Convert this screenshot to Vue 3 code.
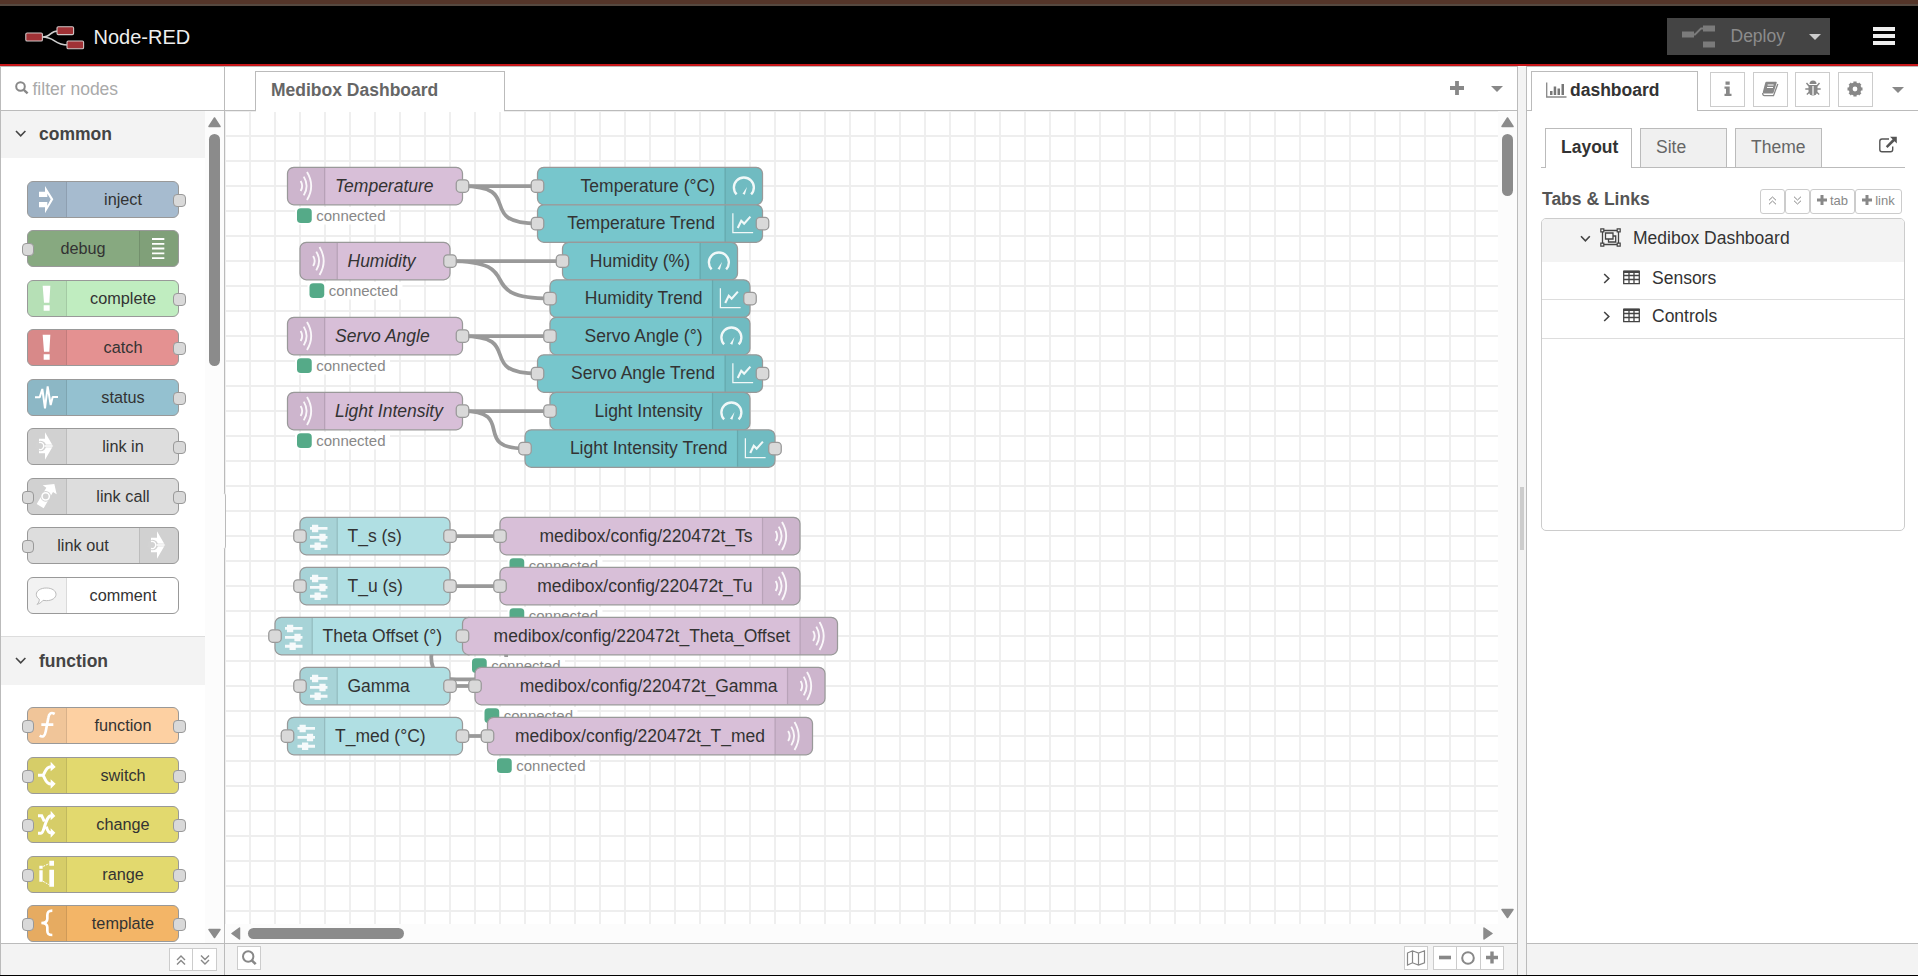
<script setup>
const common = [
  { label: 'inject', color: '#a6bbcf', icon: 'inject', out: true },
  { label: 'debug', color: '#87a980', icon: 'debug', right: true, in: true },
  { label: 'complete', color: '#c0edc0', icon: 'alert', out: true },
  { label: 'catch', color: '#e49191', icon: 'alert', out: true },
  { label: 'status', color: '#94c1d0', icon: 'status', out: true },
  { label: 'link in', color: '#dddddd', icon: 'link', out: true },
  { label: 'link call', color: '#dddddd', icon: 'call', in: true, out: true },
  { label: 'link out', color: '#dddddd', icon: 'link', right: true, in: true },
  { label: 'comment', color: '#ffffff', icon: 'comment' }
]
const functions = [
  { label: 'function', color: '#fdd0a2', icon: 'function', in: true, out: true },
  { label: 'switch', color: '#e2d96e', icon: 'switch', in: true, out: true },
  { label: 'change', color: '#e2d96e', icon: 'change', in: true, out: true },
  { label: 'range', color: '#e2d96e', icon: 'range', in: true, out: true },
  { label: 'template', color: '#f3b567', icon: 'template', in: true, out: true }
]
const categories = [
  { name: 'common', nodes: common },
  { name: 'function', nodes: functions }
]

const PINK = '#d8bfd8'
const TEAL = '#77c6cc'
const AQUA = '#b0dfe3'
const mqttIn = (label, x, y, w) => ({ label, x, y, w, color: PINK, icon: 'mqtt', italic: true, out: true, status: true })
const gauge = (label, x, y, w) => ({ label, x, y, w, color: TEAL, icon: 'gauge', right: true, in: true })
const chart = (label, x, y, w) => ({ label, x, y, w, color: TEAL, icon: 'chart', right: true, in: true, out: true })
const slider = (label, x, y, w) => ({ label, x, y, w, color: AQUA, icon: 'slider', in: true, out: true })
const mqttOut = (label, x, y, w) => ({ label, x, y, w, color: PINK, icon: 'mqtt', right: true, in: true, status: true })

const nodes = [
  mqttIn('Temperature', 50, 60, 140),
  mqttIn('Humidity', 60, 120, 120),
  mqttIn('Servo Angle', 50, 180, 140),
  mqttIn('Light Intensity', 50, 240, 140),
  gauge('Temperature (°C)', 250, 60, 180),
  chart('Temperature Trend', 250, 90, 180),
  gauge('Humidity (%)', 270, 120, 140),
  chart('Humidity Trend', 260, 150, 160),
  gauge('Servo Angle (°)', 260, 180, 160),
  chart('Servo Angle Trend', 250, 210, 180),
  gauge('Light Intensity', 260, 240, 160),
  chart('Light Intensity Trend', 240, 270, 200),
  slider('T_s (s)', 60, 340, 120),
  slider('T_u (s)', 60, 380, 120),
  slider('Theta Offset (°)', 40, 420, 160),
  slider('Gamma', 60, 460, 120),
  slider('T_med (°C)', 50, 500, 140),
  mqttOut('medibox/config/220472t_Ts', 220, 340, 240),
  mqttOut('medibox/config/220472t_Tu', 220, 380, 240),
  mqttOut('medibox/config/220472t_Theta_Offset', 190, 420, 300),
  mqttOut('medibox/config/220472t_Gamma', 200, 460, 280),
  mqttOut('medibox/config/220472t_T_med', 210, 500, 260)
]

function wire(x1, y1, x2, y2) {
  const delta = Math.hypot(x2 - x1, y2 - y1)
  const c = delta < 100 ? 0.75 * delta : 75
  return `M${x1} ${y1} C${x1 + c} ${y1} ${x2 - c} ${y2} ${x2} ${y2}`
}
const wires = [
  wire(190, 60, 250, 60), wire(190, 60, 250, 90),
  wire(180, 120, 270, 120), wire(180, 120, 260, 150),
  wire(190, 180, 260, 180), wire(190, 180, 250, 210),
  wire(190, 240, 260, 240), wire(190, 240, 240, 270),
  wire(180, 340, 220, 340), wire(180, 380, 220, 380),
  wire(180, 460, 200, 460), wire(190, 500, 210, 500),
  'M200 420 C218 420 225 425 225 437 C225 450 215 454.7 198 454.7 L185 454.7 C173 454.7 165 450 165 437 C165 425 172 420 190 420'
]
</script>

<template>
  <div class="app">
    <div class="strip"></div>
    <header class="header">
      <svg class="logo" width="60" height="24" viewBox="0 0 60 24">
        <path d="M17 11 C27 11 24 5 33 5 M17 11 C31 11 28 19 43 19" fill="none" stroke="#d0d0d0" stroke-width="1.5" />
        <g fill="#a03236" stroke="#d0c6c6" stroke-width="1.1">
          <rect x="0.8" y="7" width="16.6" height="8" rx="1.3" />
          <rect x="32" y="0.8" width="16.6" height="7.8" rx="1.3" />
          <rect x="42" y="15" width="16.6" height="7.8" rx="1.3" />
        </g>
      </svg>
      <span class="brand">Node-RED</span>
      <div class="deploy">
        <svg width="34" height="24" viewBox="0 0 34 24">
          <path d="M11 9.5 H13 L19 3.5 H22" fill="none" stroke="#7b7b7b" stroke-width="1.8" />
          <path d="M0 6.5 h12 v6 h-12z M21 0.5 h12 v6 h-12z M21 16.5 h12 v6 h-12z" fill="#7b7b7b" />
        </svg>
        <span>Deploy</span>
        <i class="caret light"></i>
      </div>
      <div class="burger"><i></i><i></i><i></i></div>
    </header>

    <main class="main">
      <section class="palette">
        <div class="search">
          <svg width="14" height="14" viewBox="0 0 14 14"><circle cx="5.5" cy="5.5" r="4.3" fill="none" stroke="#888" stroke-width="2" /><path d="M8.8 8.8 L12.6 12.4" stroke="#888" stroke-width="2.4" /></svg>
          <span>filter nodes</span>
        </div>
        <div class="palette-body">
          <div class="categories">
            <div v-for="cat in categories" :key="cat.name" class="category">
              <div class="cat-head">
                <svg width="12" height="8" viewBox="0 0 12 8"><path d="M1 1 L5.7 5.8 L10.4 1" fill="none" stroke="#444" stroke-width="1.6" /></svg>
                <span>{{ cat.name }}</span>
              </div>
              <div class="cat-nodes">
                <div v-for="n in cat.nodes" :key="n.label" class="pnode" :class="{ flip: n.right }" :style="{ background: n.color }">
                  <div class="picon">
                    <svg width="38" height="35" viewBox="3 3 114 105">
                      <path v-if="n.icon === 'inject'" fill="#fff" fill-rule="evenodd" d="M36 32 H54 V15 L79 55 L54 97 V79 H36Z M36 48 H61 V38 L71 55 L61 74 V63 H36Z" />
                      <path v-else-if="n.icon === 'debug'" stroke="#fff" stroke-width="5.500" d="M39 27 H76 M39 41.500 H76 M39 55.500 H76 M39 70 H76 M39 84.500 H76" />
                      <path v-else-if="n.icon === 'alert'" fill="#fff" d="M47 17 H70 L67 68 H51Z M50 76 H68 V92 H50Z" />
                      <path v-else-if="n.icon === 'status'" fill="none" stroke="#fff" stroke-width="6" stroke-linejoin="bevel" d="M24 55 H38 L46 30 L54 88 L62 22 L71 78 L77 54 H93" />
                      <g v-else-if="n.icon === 'link'">
                        <path fill="#fff" d="M36 32 H54 V13 L78 54 L54 95 V76 H36Z" />
                        <circle cx="41" cy="54" r="16" fill="#d2d2d2" />
                        <path d="M50 54 H80" stroke="#d2d2d2" stroke-width="8" />
                        <path d="M36 43.5 A11 11 0 1 1 36 64.500 M53 54 H77" fill="none" stroke="#fff" stroke-width="4" />
                      </g>
                      <g v-else-if="n.icon === 'call'">
                        <path fill="#fff" d="M29 78 L58 29 L47 22 L82 18 L89 49 L78 42 L50 91Z" />
                        <circle cx="56" cy="55" r="16" fill="#d2d2d2" />
                        <circle cx="56" cy="55" r="11" fill="none" stroke="#fff" stroke-width="4.500" />
                      </g>
                      <path v-else-if="n.icon === 'comment'" fill="#fff" stroke="#bbb" stroke-width="3" d="M58 33 C75 33 87 41 87 52 C87 63 75 71 58 71 L48 70 C43 77 36 80 30 82 C35 78 37 73 37 67 C31 63 28 58 28 52 C28 41 41 33 58 33Z" />
                      <path v-else-if="n.icon === 'function'" fill="none" stroke="#fff" stroke-width="8" d="M83 21 C73 15 66 18 64 32 L56 74 C54 87 47 92 38 86 M43 53 H79" />
                      <g v-else-if="n.icon === 'switch'" fill="none" stroke="#fff" stroke-width="9">
                        <path d="M33 55 H50 M48 55 C56 44 56 29 72 29 M48 55 C56 66 56 81 72 81" />
                        <path d="M71 14 L86 30 L71 43Z M71 67 L86 80 L71 95Z" fill="#fff" stroke="none" />
                      </g>
                      <g v-else-if="n.icon === 'change'" fill="none" stroke="#fff" stroke-width="9">
                        <path d="M33 29 H44 L52 46 M33 82 H42 C53 82 54 29 73 29 M58 62 C61 74 65 81 73 81" />
                        <path d="M71 14 L85 30 L71 43Z M71 67 L85 80 L71 95Z" fill="#fff" stroke="none" />
                      </g>
                      <g v-else-if="n.icon === 'range'" fill="#fff">
                        <path d="M37 29 H47 V38 H37Z M37 43 H47 V77 H37Z M67 14 H81 V29 H67Z M67 41 H81 V92 H67Z" />
                        <path d="M49 31 L66 23 M48 76 L66 86" stroke="#fff" stroke-width="3" stroke-dasharray="6 3" />
                      </g>
                      <path v-else fill="none" stroke="#fff" stroke-width="8" d="M76 17 C64 17 61 21 61 31 V41 C61 49 56 54 43 54 C56 54 61 59 61 67 V77 C61 86 64 90 76 90" />
                    </svg>
                  </div>
                  <span class="plabel">{{ n.label }}</span>
                  <i v-if="n.in" class="port pin"></i>
                  <i v-if="n.out" class="port pout"></i>
                </div>
              </div>
            </div>
          </div>
          <div class="vscroll">
            <svg width="13" height="11" viewBox="0 0 13 11"><path d="M6.500 1 L12 9.500 H1Z" fill="#8b8b8b" stroke="#8b8b8b" stroke-width="1.500" stroke-linejoin="round" /></svg>
            <i class="thumb tall"></i>
            <svg class="down" width="13" height="11" viewBox="0 0 13 11"><path d="M1 1.500 H12 L6.500 9.500Z" fill="#8b8b8b" stroke="#8b8b8b" stroke-width="1.500" stroke-linejoin="round" /></svg>
          </div>
        </div>
        <div class="foot palette-foot">
          <span class="fbtn"><svg width="12" height="12" viewBox="0 0 12 12"><path d="M2 6 L6 2 L10 6 M2 10.500 L6 6.500 L10 10.500" fill="none" stroke="#888" stroke-width="1.400" /></svg></span>
          <span class="fbtn"><svg width="12" height="12" viewBox="0 0 12 12"><path d="M2 1.500 L6 5.500 L10 1.500 M2 6 L6 10 L10 6" fill="none" stroke="#888" stroke-width="1.400" /></svg></span>
        </div>
        <i class="handle"></i>
      </section>

      <section class="workspace">
        <div class="tabs">
          <div class="tab flow-tab">Medibox Dashboard</div>
          <svg class="plus" width="14" height="14" viewBox="0 0 14 14"><path d="M7 0 V14 M0 7 H14" stroke="#888" stroke-width="3.800" /></svg>
          <i class="caret"></i>
        </div>
        <div class="canvas-row">
          <svg class="canvas" width="1273" height="813">
            <g transform="scale(1.25)">
              <g stroke="#eee" stroke-width="1.500">
                <path v-for="i in 51" :key="'v' + i" :d="`M${(i - 1) * 20} 0 V651`" />
                <path v-for="i in 33" :key="'h' + i" :d="`M0 ${(i - 1) * 20} H1019`" />
              </g>
              <path v-for="(d, i) in wires" :key="'w' + i" :d="d" fill="none" stroke="#999" stroke-width="3" />
              <g v-for="n in nodes" :key="n.label + n.x" :transform="`translate(${n.x} ${n.y - 15})`">
                <rect :width="n.w" height="30" rx="5" :fill="n.color" stroke="#999" />
                <g :transform="n.right ? `translate(${n.w - 30} 0)` : ''">
                  <path v-if="n.right" d="M0 .5 H25.500 A4 4 0 0 1 29.500 4.500 V25.500 A4 4 0 0 1 25.500 29.500 H0Z" class="shade" />
                  <path v-else d="M30 .5 H4.500 A4 4 0 0 0 .5 4.500 V25.500 A4 4 0 0 0 4.500 29.500 H30Z" class="shade" />
                  <path :d="n.right ? 'M0 .5 V29.500' : 'M29.800 .5 V29.500'" stroke="#000" stroke-opacity=".12" />
                  <g transform="translate(0 15)" fill="none" stroke="#fff" opacity=".9">
                    <g v-if="n.icon === 'mqtt'" stroke-width="1.500">
                      <path d="M10.500 -4 Q13 0 10.500 4" />
                      <path d="M13 -7.500 Q17.600 0 13 7.500" />
                      <path d="M15.600 -11.200 Q22.300 0 15.600 11.200" />
                    </g>
                    <g v-else-if="n.icon === 'gauge'">
                      <path d="M9.300 6.700 A8 8 0 1 1 20.900 6.700" stroke-width="1.900" />
                      <path d="M17.600 .7 L14 6.200 L15.900 7Z" fill="#fff" stroke="none" />
                    </g>
                    <g v-else-if="n.icon === 'chart'">
                      <path d="M6.300 -8.300 V7.200 H22.500" />
                      <path d="M10.200 3.600 L13 -2.200 L15.300 .1 L20.300 -5.500" stroke-width="1.700" />
                    </g>
                    <g v-else>
                      <path d="M8 -6.100 H22 M8 1.100 H22 M8 8.200 H22" stroke-width="2.300" />
                      <path d="M9.600 -6.100 H14.600 M15.500 1.100 H20.500 M11.600 8.200 H16.600" stroke-width="6" />
                    </g>
                  </g>
                </g>
                <text :x="n.right ? n.w - 38 : 38" y="19.500" :text-anchor="n.right ? 'end' : 'start'" class="nlabel" :class="{ italic: n.italic }">{{ n.label }}</text>
                <g v-if="n.status">
                  <rect x="6" y="31.800" width="76" height="14" fill="#fff" fill-opacity=".95" />
                  <rect x="7.600" y="32.700" width="11.800" height="11.800" rx="3" fill="#5a8" />
                  <text x="23" y="43" class="nstatus">connected</text>
                </g>
                <rect v-if="n.in" x="-5" y="10" width="10" height="10" rx="3" fill="#d9d9d9" stroke="#999" />
                <rect v-if="n.out" :x="n.w - 5" y="10" width="10" height="10" rx="3" fill="#d9d9d9" stroke="#999" />
              </g>
            </g>
          </svg>
          <div class="vscroll">
            <svg width="13" height="11" viewBox="0 0 13 11"><path d="M6.500 1 L12 9.500 H1Z" fill="#8b8b8b" stroke="#8b8b8b" stroke-width="1.500" stroke-linejoin="round" /></svg>
            <i class="thumb short"></i>
            <svg class="down canvas-down" width="13" height="11" viewBox="0 0 13 11"><path d="M1 1.500 H12 L6.500 9.500Z" fill="#8b8b8b" stroke="#8b8b8b" stroke-width="1.500" stroke-linejoin="round" /></svg>
          </div>
        </div>
        <div class="hscroll">
          <svg width="10" height="13" viewBox="0 0 10 13"><path d="M1 6.500 L8.500 1 V12Z" fill="#8b8b8b" stroke="#8b8b8b" stroke-width="1.500" stroke-linejoin="round" /></svg>
          <i class="hthumb"></i>
          <svg class="hright" width="10" height="13" viewBox="0 0 10 13"><path d="M9 6.500 L1 1 V12Z" fill="#8b8b8b" stroke="#8b8b8b" stroke-width="1.500" stroke-linejoin="round" /></svg>
        </div>
        <div class="foot work-foot">
          <span class="sbtn"><svg width="16" height="16" viewBox="0 0 16 16"><circle cx="7.200" cy="6.500" r="5.200" fill="none" stroke="#888" stroke-width="2" /><path d="M10.800 10.300 L14.700 14.200" stroke="#888" stroke-width="2.600" /></svg></span>
          <span class="sbtn map"><svg width="20" height="18" viewBox="0 0 20 18"><path d="M1.500 4 L6.500 1.800 L12.500 4 L18.500 1.800 V13.800 L12.500 16 L6.500 13.800 L1.500 16Z M6.500 1.800 V13.800 M12.500 4 V16" fill="none" stroke="#888" stroke-width="1.200" /></svg></span>
          <span class="zoomers">
            <span class="sbtn"><svg width="14" height="14" viewBox="0 0 14 14"><path d="M1 6.500 H13" stroke="#888" stroke-width="3.600" /></svg></span>
            <span class="sbtn"><svg width="14" height="14" viewBox="0 0 14 14"><circle cx="7" cy="7" r="5.800" fill="none" stroke="#888" stroke-width="2" /></svg></span>
            <span class="sbtn"><svg width="14" height="14" viewBox="0 0 14 14"><path d="M7 .5 V12.500 M1 6.500 H13" stroke="#888" stroke-width="3.400" /></svg></span>
          </span>
        </div>
      </section>

      <div class="separator"><i></i></div>

      <aside class="sidebar">
        <div class="tabs side-tabs">
          <div class="tab dash-tab">
            <svg width="22" height="17" viewBox="0 0 22 17"><path d="M.7 0.500 V15 H20.500" fill="none" stroke="#888" stroke-width="1.300" /><path d="M4 9 H6.500 V13 H4Z M7.700 4.500 H10.200 V13 H7.700Z M11.500 6.500 H14 V13 H11.500Z M15.500 2 H18 V13 H15.500Z" fill="#777" /></svg>
            <span>dashboard</span>
          </div>
          <div class="side-btns">
            <span><svg width="16" height="16" viewBox="0 0 16 16"><path d="M5.500 .5 H9.700 V3.700 H5.500Z M4.500 5.500 H9.700 V12.700 H11.500 V15 H4.500 V12.700 H6 V7.700 H4.500Z" fill="#888" /></svg></span>
            <span><svg width="18" height="16" viewBox="0 0 18 16"><path d="M5.500 .8 H15 Q16 .8 15.700 1.800 L12.600 11.500 Q12.300 12.500 11.300 12.500 H3 Q1.500 12.500 1.800 11 L4.200 2 Q4.500 .8 5.500 .8Z" fill="#888" /><path d="M1.700 12 Q1.500 14.600 3.500 14.700 H12.500 L16.800 3" fill="none" stroke="#888" stroke-width="1.300" /><path d="M6.600 4 H12.600 M6 6.500 H12" stroke="#fff" stroke-width="1" /></svg></span>
            <span><svg width="18" height="17" viewBox="0 0 18 17"><path d="M5.500 4 A3.500 3.500 0 0 1 12.500 4Z" fill="#888" /><path d="M4.500 5 H13.500 V11 A4.500 4.500 0 0 1 4.500 11Z" fill="#888" /><path d="M9 6 V15" stroke="#fff" stroke-width="1.200" /><path d="M2.500 3 L5 6 M15.500 3 L13 6 M1.300 9 H5 M13 9 H16.700 M2.800 14.500 L5.500 12 M15.200 14.500 L12.500 12" stroke="#888" stroke-width="1.400" /></svg></span>
            <span><svg width="18" height="18" viewBox="0 0 18 18"><circle cx="9" cy="9" r="4.400" fill="none" stroke="#888" stroke-width="4" /><path d="M9 1.500 V4 M9 14 V16.500 M1.500 9 H4 M14 9 H16.500 M3.700 3.700 L5.500 5.500 M12.500 12.500 L14.300 14.300 M14.300 3.700 L12.500 5.500 M5.500 12.500 L3.700 14.300" stroke="#888" stroke-width="3.200" /></svg></span>
          </div>
          <i class="caret side-caret"></i>
        </div>
        <div class="side-body">
          <div class="subtabs">
            <div class="subtab active">Layout</div>
            <div class="subtab">Site</div>
            <div class="subtab">Theme</div>
            <svg class="ext" width="20" height="18" viewBox="0 0 20 18"><path d="M11 3 H4 Q1.800 3 1.800 5.200 V13.500 Q1.800 15.700 4 15.700 H12.500 Q14.700 15.700 14.700 13.500 V10.500" fill="none" stroke="#555" stroke-width="1.400" /><path d="M12 .8 H18.800 V7.500 L16.500 5.300 L9.500 12 L7.800 10.200 L14.600 3.300Z" fill="#555" /></svg>
          </div>
          <div class="links-head">
            <b>Tabs &amp; Links</b>
            <span class="mini sq"><svg width="9" height="9" viewBox="0 0 9 9"><path d="M1 4.300 L4.500 1 L8 4.300 M1 8.300 L4.500 5 L8 8.300" fill="none" stroke="#888" /></svg></span>
            <span class="mini sq"><svg width="9" height="9" viewBox="0 0 9 9"><path d="M1 .7 L4.500 4 L8 .7 M1 4.700 L4.500 8 L8 4.700" fill="none" stroke="#888" /></svg></span>
            <span class="mini tabb"><svg width="10" height="10" viewBox="0 0 10 10"><path d="M5 0 V10 M0 5 H10" stroke="#888" stroke-width="3" /></svg>tab</span>
            <span class="mini linkb"><svg width="10" height="10" viewBox="0 0 10 10"><path d="M5 0 V10 M0 5 H10" stroke="#888" stroke-width="3" /></svg>link</span>
          </div>
          <div class="tree">
            <div class="row root">
              <svg class="chev-d" width="11" height="8" viewBox="0 0 11 8"><path d="M1 1.200 L5.400 5.800 L9.800 1.200" fill="none" stroke="#444" stroke-width="1.600" /></svg>
              <svg class="grp" width="21" height="19" viewBox="0 0 21 19"><path d="M2.500 2.500 H18.500 V16.500 H2.500Z M5.500 5 H13 V11 H5.500Z M13 8 H15.700 V14 H8.500 V11" fill="none" stroke="#444" stroke-width="1.300" /><path d="M.8 .8 H3.800 V3.800 H.8Z M17.200 .8 H20.200 V3.800 H17.200Z M.8 15.200 H3.800 V18.200 H.8Z M17.200 15.200 H20.200 V18.200 H17.200Z" fill="#f3f3f3" stroke="#444" stroke-width="1.200" /></svg>
              <span>Medibox Dashboard</span>
            </div>
            <div v-for="name in ['Sensors', 'Controls']" :key="name" class="row child">
              <svg class="chev-r" width="8" height="11" viewBox="0 0 8 11"><path d="M1.200 1 L5.800 5.500 L1.200 10" fill="none" stroke="#444" stroke-width="1.600" /></svg>
              <svg class="tbl" width="17" height="15" viewBox="0 0 17 15"><path d="M.7 1.500 H16.300 V13.700 H.7Z M.7 5.500 H16.300 M.7 9.500 H16.300 M6 3 V13.700 M11 3 V13.700" fill="none" stroke="#444" stroke-width="1.300" /><path d="M.5 .5 H16.500 V3 H.5Z" fill="#444" /></svg>
              <span>{{ name }}</span>
            </div>
          </div>
        </div>
        <div class="foot"></div>
      </aside>
    </main>
  </div>
</template>

<style>
body { background: #000; }
</style>

<style scoped>
* { box-sizing: border-box; }
.app { width: 1918px; height: 976px; display: flex; flex-direction: column; overflow: hidden; background: #000; font-family: "Liberation Sans", Arial, sans-serif; font-size: 17.5px; color: #444; padding-bottom: 1px; }
svg { display: block; flex: none; }
i { display: block; flex: none; }
.strip { height: 6px; background: #543529; border-bottom: 2px solid #55483f; flex: none; }
.header { height: 60px; flex: none; background: #000; border-bottom: 2px solid #c7171a; display: flex; align-items: flex-start; }
.logo { margin: 20px 0 0 25px; }
.brand { margin: 20px 0 0 8.5px; font-size: 20px; line-height: 23px; color: #eee; }
.deploy { margin: 12px 0 0 auto; width: 163px; height: 37px; background: #444; display: flex; align-items: center; padding-left: 15px; color: #8c8c8c; }
.deploy span { margin-left: 14.500px; width: 78px; line-height: 20px; padding-bottom: 1px; }
.caret { width: 0; height: 0; border: 6px solid transparent; border-top: 6px solid #888; border-bottom: 0; }
.caret.light { border-top-color: #ccc; }
.burger { width: 22px; margin: 21px 23px 0 43px; display: flex; flex-direction: column; gap: 3px; }
.burger i { height: 4px; background: #eee; }
.main { height: 909px; flex: none; display: flex; background: #fff; }

.palette { width: 225px; flex: none; border: 1px solid #bbb; border-bottom: 0; display: flex; flex-direction: column; position: relative; }
.search { height: 44px; flex: none; border-bottom: 1px solid #bbb; display: flex; align-items: center; padding: 0 0 1px 14px; color: #aaa; }
.search span { margin-left: 3.500px; padding-top: 2px; }
.palette-body { height: 832px; flex: none; display: flex; overflow: hidden; }
.categories { width: 204px; height: 832px; overflow: hidden; }
.cat-head { height: 47px; background: #f3f3f3; display: flex; align-items: center; padding: 0 0 1px 14px; font-weight: bold; color: #444; }
.category + .category .cat-head { height: 49px; border-top: 1px solid #ddd; padding-bottom: 0; }
.cat-head span { margin-left: 12px; }
.cat-nodes { padding: 22.800px 0 22.350px 26px; display: flex; flex-direction: column; gap: 12.500px; }
.category + .category .cat-nodes { padding-top: 22px; }
.pnode { width: 152px; height: 37px; border: 1px solid #999; border-radius: 6px; display: flex; position: relative; font-size: 16.25px; color: #333; flex: none; }
.picon { width: 39px; background: rgba(0, 0, 0, 0.05); border-right: 1px solid rgba(0, 0, 0, 0.1); border-radius: 5px 0 0 5px; }
.flip { flex-direction: row-reverse; }
.flip .picon { border-right: 0; border-left: 1px solid rgba(0, 0, 0, 0.1); border-radius: 0 5px 5px 0; }
.plabel { flex: 1; text-align: center; line-height: 35px; padding-left: 1px; }
.flip .plabel { padding: 0 1px 0 0; }
.port { position: absolute; top: 12px; width: 13px; height: 13px; border: 1px solid #999; border-radius: 4px; background: #d9d9d9; }
.pin { left: -6px; width: 12px; }
.pout { right: -8px; }
.vscroll { width: 19px; flex: none; background: #fcfcfc; display: flex; flex-direction: column; align-items: center; padding-top: 6px; }
.thumb { width: 11px; border-radius: 6px; background: #8b8b8b; margin-top: 6px; }
.tall { height: 232px; }
.short { height: 62px; }
.down { margin: auto 0 4px; }
.canvas-down { margin-bottom: 5px; }
.foot { height: 32px; flex: none; background: #f3f3f3; border-top: 1px solid #bbb; display: flex; }
.palette-foot { padding: 4px 7px 0 0; justify-content: flex-end; }
.fbtn { width: 24px; height: 23px; border: 1px solid #ccc; background: #fff; display: flex; align-items: center; justify-content: center; }
.fbtn + .fbtn { width: 25px; margin-left: -1px; }
.handle { position: absolute; right: -2px; top: 426px; width: 4px; height: 56px; border-right: 1px solid #bbb; border-radius: 0 3px 3px 0; background: #fcfcfc; }

.workspace { width: 1293px; flex: none; display: flex; flex-direction: column; border-right: 1px solid #bbb; }
.tabs { height: 45px; flex: none; border-top: 1px solid #bbb; border-bottom: 1px solid #bbb; display: flex; align-items: flex-start; }
.tab { margin-top: 4px; height: 40px; border: 1px solid #bbb; border-bottom: 0; background: #fff; font-weight: bold; position: relative; }
.tab::after { content: ""; position: absolute; left: 0; right: 0; bottom: -1px; height: 1px; background: #fff; }
.flow-tab { margin-left: 30px; width: 250px; padding-left: 15px; line-height: 37px; color: #666; }
.plus { margin: 14px 0 0 945px; }
.workspace .caret { margin: 19px 0 0 27px; }
.canvas-row { height: 813px; flex: none; display: flex; }
.canvas { background: #fff; }
.shade { fill: #000; fill-opacity: 0.05; }
.nlabel { font-size: 14px; fill: #333; }
.italic { font-style: italic; }
.nstatus { font-size: 12px; fill: #888; }
.hscroll { height: 19px; flex: none; background: #fcfcfc; display: flex; align-items: center; padding-left: 6px; }
.hthumb { width: 156px; height: 11px; border-radius: 6px; background: #8b8b8b; margin-left: 7px; }
.hright { margin-left: 1079px; }
.work-foot { padding: 2px 13px 0 12px; }
.sbtn { width: 24px; height: 24px; border: 1px solid #ccc; background: #fff; display: flex; align-items: center; justify-content: center; }
.map { margin-left: auto; }
.zoomers { display: flex; margin-left: 5px; }
.zoomers .sbtn + .sbtn { margin-left: -1px; width: 24.500px; }

.separator { width: 8px; flex: none; background: #f3f3f3; display: flex; align-items: flex-start; padding: 421px 0 0 2px; }
.separator i { width: 4px; height: 63px; background: #ccc; }
.sidebar { width: 392px; flex: none; border-left: 1px solid #bbb; display: flex; flex-direction: column; }
.dash-tab { margin-left: 4px; width: 167px; display: flex; padding-left: 14px; line-height: 37px; color: #333; }
.dash-tab svg { margin: 10px 2px 0 0; }
.side-btns { display: flex; gap: 7.600px; margin: 5px 0 0 12px; }
.side-btns span { width: 35px; height: 35px; border: 1px solid #ccc; display: flex; align-items: center; justify-content: center; padding-bottom: 2px; }
.side-caret { margin: 20px 0 0 19px; }
.side-body { height: 832px; flex: none; padding: 17px 13px 0 14px; }
.subtabs { height: 40px; border-bottom: 1px solid #bbb; display: flex; padding-left: 4px; gap: 8px; }
.subtab { width: 87px; border: 1px solid #bbb; border-bottom: 0; background: #f0f0f0; padding-left: 15px; line-height: 37px; color: #666; }
.active { background: #fff; color: #333; font-weight: bold; height: 40px; }
.ext { margin: 8px 0 0 auto; margin-right: 7px; }
.links-head { height: 50px; display: flex; align-items: flex-start; padding: 21px 3px 0 1px; }
.links-head b { color: #555; line-height: 20px; margin-right: auto; }
.mini { height: 25px; border: 1px solid #ccc; border-radius: 3px; background: #fff; display: flex; align-items: center; justify-content: center; gap: 3px; font-size: 13px; color: #888; padding-bottom: 3px; }
.sq { width: 25px; }
.tabb { width: 45px; }
.linkb { width: 47px; }
.tree { height: 313px; border: 1px solid #ccc; border-radius: 5px; overflow: hidden; }
.row { display: flex; color: #333; }
.row span { line-height: 20px; }
.root { height: 43px; background: #f3f3f3; padding: 9px 0 0 38px; }
.root span { margin-left: 12px; }
.chev-d { margin-top: 7px; }
.grp { margin: 0 0 0 9px; }
.child { height: 38px; border-bottom: 1px solid #ddd; padding: 6px 0 0 61px; }
.child:last-child { height: 39px; }
.chev-r { margin-top: 5px; }
.tbl { margin: 2px 0 0 12px; }
.child span { margin-left: 12px; }
</style>
